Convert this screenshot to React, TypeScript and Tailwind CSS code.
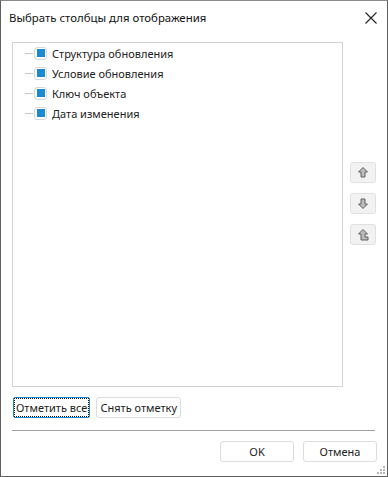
import React from "react";

const items = [
  "Структура обновления",
  "Условие обновления",
  "Ключ объекта",
  "Дата изменения",
];

function Arrow({ kind }: { kind: "up" | "down" | "top" }) {
  return (
    <button className="w-[26px] h-[21px] rounded-[3px] border border-[#e0e0e0] bg-[#f2f2f2] flex items-center justify-center">
      {kind === "up" && (
        <svg width="10" height="11" viewBox="0 0 10 11">
          <path d="M5 0.5 L9.5 5 L7 5 L7 10 L3 10 L3 5 L0.5 5 Z" fill="#bcbcbc" stroke="#606060" strokeWidth="1" />
        </svg>
      )}
      {kind === "down" && (
        <svg width="10" height="11" viewBox="0 0 10 11">
          <path d="M5 10.5 L9.5 6 L7 6 L7 1 L3 1 L3 6 L0.5 6 Z" fill="#bcbcbc" stroke="#606060" strokeWidth="1" />
        </svg>
      )}
      {kind === "top" && (
        <svg width="11" height="12" viewBox="0 0 11 12">
          <path d="M5 0.5 L9.5 5 L7 5 L7 8 L10 8 L10 11 L3 11 L3 5 L0.5 5 Z" fill="#bcbcbc" stroke="#606060" strokeWidth="1" />
        </svg>
      )}
    </button>
  );
}

export default function App() {
  return (
    <div
      className="relative w-[388px] h-[477px] bg-white border border-[#5f5f5f] border-t-[#8a8a8a] flex flex-col text-[11px] text-[#222]"
      style={{ fontFamily: '"Noto Sans", "Open Sans", sans-serif' }}
    >
      <div className="h-[33px] flex items-center justify-between pl-[8px] pr-[8px]">
        <span className="text-[11.4px] text-[#111] mt-[1px]">Выбрать столбцы для отображения</span>
        <svg width="12" height="12" viewBox="0 0 12 12" className="mr-[2px]">
          <path d="M0.5 0.5 L11.5 11.5 M11.5 0.5 L0.5 11.5" stroke="#222" strokeWidth="1.1" />
        </svg>
      </div>
      <div className="flex mt-[8px] pl-[11px]">
        <div className="w-[331px] h-[345px] border border-[#d2d2d2]">
          {items.map((t) => (
            <div key={t} className="h-[20px] flex items-center">
              <div className="w-[8px] h-px bg-[#c8c8c8] ml-[12px]" />
              <div className="ml-[1px] w-[13px] h-[13px] rounded-[3px] border border-[#d8d8d8] flex items-center justify-center">
                <div className="w-[8px] h-[8px] bg-[#1c8ad0]" />
              </div>
              <span className="ml-[5px] leading-none">{t}</span>
            </div>
          ))}
        </div>
        <div className="ml-[7px] mt-[120px] flex flex-col gap-[10px]">
          <Arrow kind="up" />
          <Arrow kind="down" />
          <Arrow kind="top" />
        </div>
      </div>
      <div className="flex gap-[6px] pl-[12px] mt-[10px]">
        <button className="h-[21px] px-[1px] border border-[#1c86d0] rounded-[2px] flex items-center">
          <span className="h-[17px] px-[1px] flex items-center outline outline-1 outline-dotted outline-[#111] leading-none">
            Отметить все
          </span>
        </button>
        <button className="h-[21px] px-[3px] border border-[#dcdcdc] rounded-[3px] leading-none">
          Снять отметку
        </button>
      </div>
      <div className="mt-[12px] ml-[11px] w-[363px] h-px bg-[#a0a0a0]" />
      <div className="flex justify-end gap-[9px] pr-[10px] mt-[10px]">
        <button className="w-[74px] h-[21px] border border-[#dcdcdc] rounded-[3px] leading-none">OK</button>
        <button className="w-[74px] h-[21px] border border-[#dcdcdc] rounded-[3px] leading-none">Отмена</button>
      </div>
      <svg width="9" height="9" viewBox="0 0 9 9" className="absolute right-[1px] bottom-[1px]">
        <rect x="6" y="0" width="2" height="2" fill="#b8b8b8" />
        <rect x="3" y="3" width="2" height="2" fill="#b8b8b8" />
        <rect x="6" y="3" width="2" height="2" fill="#b8b8b8" />
        <rect x="0" y="6" width="2" height="2" fill="#b8b8b8" />
        <rect x="3" y="6" width="2" height="2" fill="#b8b8b8" />
        <rect x="6" y="6" width="2" height="2" fill="#b8b8b8" />
      </svg>
    </div>
  );
}
